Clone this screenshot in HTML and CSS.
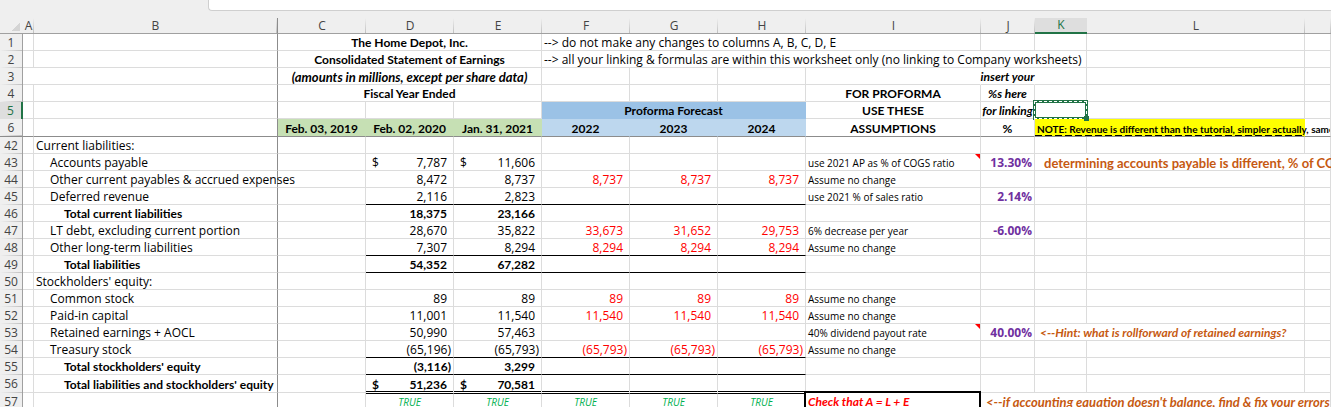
FILE: index.html
```html
<!DOCTYPE html>
<html lang="en">
<head>
    <meta charset="UTF-8">
    <meta name="viewport" content="width=device-width, initial-scale=1.0">
    <title>The Home Depot - Proforma</title>
    <link rel="stylesheet" href="styles.css">
</head>
<body>
    <div class="formula-area">
        <input type="text" class="formula-bar" aria-label="Formula bar">
    </div>

    <table class="sheet">
        <colgroup>
            <col class="col-head"><col class="col-a"><col class="col-b">
            <col class="col-year" span="6">
            <col class="col-i"><col class="col-j"><col class="col-k"><col class="col-l"><col>
        </colgroup>
        <thead>
            <tr>
                <th class="corner"></th><th>A</th><th class="freeze">B</th><th>C</th><th>D</th><th>E</th><th>F</th><th>G</th><th>H</th><th>I</th><th>J</th><th class="selected">K</th><th>L</th><th></th>
            </tr>
        </thead>

        <!-- Frozen rows -->
        <tbody class="frozen">
            <tr>
                <th>1</th><td></td><td class="freeze"></td>
                <td colspan="3" class="title">The Home Depot, Inc.</td>
                <td colspan="4">--&gt; do not make any changes to columns A, B, C, D, E</td>
                <td></td><td></td><td></td><td></td>
            </tr>
            <tr>
                <th>2</th><td></td><td class="freeze"></td>
                <td colspan="3" class="title">Consolidated Statement of Earnings</td>
                <td colspan="6">--&gt; all your linking &amp; formulas are within this worksheet only (no linking to Company worksheets)</td>
                <td></td><td></td>
            </tr>
            <tr>
                <th>3</th><td colspan="2" class="freeze"></td>
                <td colspan="3" class="title units"><em>(amounts in millions, except per share data)</em></td>
                <td></td><td></td><td></td><td class="open"></td>
                <td class="hint open"><span>insert your</span></td><td></td><td></td><td></td>
            </tr>
            <tr>
                <th>4</th><td></td><td class="freeze"></td>
                <td colspan="3" class="title">Fiscal Year Ended</td>
                <td></td><td></td><td></td><td class="title">FOR PROFORMA</td>
                <td class="hint"><span>%s here</span></td><td></td><td></td><td></td>
            </tr>
            <tr>
                <th class="selected">5</th><td></td><td class="freeze"></td>
                <td></td><td></td><td></td>
                <td colspan="3" class="title forecast">Proforma Forecast</td>
                <td class="title">USE THESE</td>
                <td class="hint"><span>for linking</span></td><td class="active"><i class="handle"></i></td><td></td><td></td>
            </tr>
            <tr class="last">
                <th>6</th><td></td><td class="freeze"></td>
                <td class="title actual">Feb. 03, 2019</td><td class="title actual">Feb. 02, 2020</td><td class="title actual">Jan. 31, 2021</td>
                <td class="title year">2022</td><td class="title year">2023</td><td class="title year">2024</td>
                <td class="title">ASSUMPTIONS</td><td class="title">%</td>
                <td colspan="2" class="alert">NOTE: Revenue is different than the tutorial, simpler actually, same</td><td></td>
            </tr>
        </tbody>

        <tbody class="data">
            <tr>
                <th>42</th><td></td><td class="freeze">Current liabilities:</td>
                <td></td><td></td><td></td><td></td><td></td><td></td><td></td><td></td><td></td><td></td><td></td>
            </tr>
            <tr>
                <th>43</th><td></td><td class="freeze item">Accounts payable</td><td></td>
                <td class="num"><div class="money"><span>$</span><span>7,787</span></div></td>
                <td class="num"><div class="money"><span>$</span><span>11,606</span></div></td>
                <td></td><td></td><td></td>
                <td class="note comment">use 2021 AP as % of COGS ratio</td><td class="pct">13.30%</td>
                <td colspan="3" class="tip indent">determining accounts payable is different, % of COGS</td>
            </tr>
            <tr>
                <th>44</th><td></td><td class="freeze item">Other current payables &amp; accrued expenses</td><td></td>
                <td class="num">8,472</td><td class="num">8,737</td>
                <td class="num calc">8,737</td><td class="num calc">8,737</td><td class="num calc">8,737</td>
                <td class="note">Assume no change</td><td></td><td></td><td></td><td></td>
            </tr>
            <tr class="line">
                <th>45</th><td></td><td class="freeze item">Deferred revenue</td><td></td>
                <td class="num">2,116</td><td class="num">2,823</td>
                <td class="num"></td><td class="num"></td><td class="num"></td>
                <td class="note">use 2021 % of sales ratio</td><td class="pct">2.14%</td><td></td><td></td><td></td>
            </tr>
            <tr>
                <th>46</th><td></td><td class="freeze total">Total current liabilities</td><td></td>
                <td class="num bold">18,375</td><td class="num bold">23,166</td>
                <td></td><td></td><td></td><td></td><td></td><td></td><td></td><td></td>
            </tr>
            <tr>
                <th>47</th><td></td><td class="freeze item">LT debt, excluding current portion</td><td></td>
                <td class="num">28,670</td><td class="num">35,822</td>
                <td class="num calc">33,673</td><td class="num calc">31,652</td><td class="num calc">29,753</td>
                <td class="note">6% decrease per year</td><td class="pct">-6.00%</td><td></td><td></td><td></td>
            </tr>
            <tr class="line">
                <th>48</th><td></td><td class="freeze item">Other long-term liabilities</td><td></td>
                <td class="num">7,307</td><td class="num">8,294</td>
                <td class="num calc">8,294</td><td class="num calc">8,294</td><td class="num calc">8,294</td>
                <td class="note">Assume no change</td><td></td><td></td><td></td><td></td>
            </tr>
            <tr class="line">
                <th>49</th><td></td><td class="freeze total">Total liabilities</td><td></td>
                <td class="num bold">54,352</td><td class="num bold">67,282</td>
                <td class="num"></td><td class="num"></td><td class="num"></td>
                <td></td><td></td><td></td><td></td><td></td>
            </tr>
            <tr>
                <th>50</th><td></td><td class="freeze">Stockholders' equity:</td>
                <td></td><td></td><td></td><td></td><td></td><td></td><td></td><td></td><td></td><td></td><td></td>
            </tr>
            <tr>
                <th>51</th><td></td><td class="freeze item">Common stock</td><td></td>
                <td class="num">89</td><td class="num">89</td>
                <td class="num calc">89</td><td class="num calc">89</td><td class="num calc">89</td>
                <td class="note">Assume no change</td><td></td><td></td><td></td><td></td>
            </tr>
            <tr>
                <th>52</th><td></td><td class="freeze item">Paid-in capital</td><td></td>
                <td class="num">11,001</td><td class="num">11,540</td>
                <td class="num calc">11,540</td><td class="num calc">11,540</td><td class="num calc">11,540</td>
                <td class="note">Assume no change</td><td></td><td></td><td></td><td></td>
            </tr>
            <tr>
                <th>53</th><td></td><td class="freeze item">Retained earnings + AOCL</td><td></td>
                <td class="num">50,990</td><td class="num">57,463</td>
                <td></td><td></td><td></td>
                <td class="note comment">40% dividend payout rate</td><td class="pct">40.00%</td>
                <td colspan="2" class="tip small"><em>&lt;--Hint: what is rollforward of retained earnings?</em></td><td></td>
            </tr>
            <tr class="line">
                <th>54</th><td></td><td class="freeze item">Treasury stock</td><td></td>
                <td class="num neg">(65,196)</td><td class="num neg">(65,793)</td>
                <td class="num neg calc">(65,793)</td><td class="num neg calc">(65,793)</td><td class="num neg calc">(65,793)</td>
                <td class="note">Assume no change</td><td></td><td></td><td></td><td></td>
            </tr>
            <tr class="line">
                <th>55</th><td></td><td class="freeze total">Total stockholders' equity</td><td></td>
                <td class="num neg bold">(3,116)</td><td class="num bold">3,299</td>
                <td class="num"></td><td class="num"></td><td class="num"></td>
                <td></td><td></td><td></td><td></td><td></td>
            </tr>
            <tr class="grand">
                <th>56</th><td></td><td class="freeze total">Total liabilities and stockholders' equity</td><td></td>
                <td class="num bold"><div class="money"><span>$</span><span>51,236</span></div></td>
                <td class="num bold"><div class="money"><span>$</span><span>70,581</span></div></td>
                <td class="num"></td><td class="num"></td><td class="num"></td>
                <td></td><td></td><td></td><td></td><td></td>
            </tr>
            <tr>
                <th>57</th><td></td><td class="freeze"></td><td></td>
                <td class="true">TRUE</td><td class="true">TRUE</td><td class="true">TRUE</td><td class="true">TRUE</td><td class="true">TRUE</td>
                <td class="check">Check that A = L + E</td>
                <td colspan="4" class="tip balance"><em>&lt;--if accounting equation doesn't balance, find &amp; fix your errors</em></td>
            </tr>
        </tbody>
    </table>
</body>
</html>
```
FILE: styles.css
```css
* {
    box-sizing: border-box;
}

body {
    margin: 0;
    height: 100vh;
    overflow: hidden;
    background-color: #ffffff;
    color: #000000;
    font-family: "Open Sans", "Noto Sans", sans-serif;
    font-size: 12px;
    line-height: 14px;
}

/* Formula bar */
.formula-area {
    height: 18px;
    padding-left: 208px;
    background-color: #efefef;
}

.formula-bar {
    display: block;
    width: 100%;
    height: 11px;
    padding: 0 8px;
    border: 1px solid #cfcfcf;
    border-width: 0 0 1px 1px;
    border-radius: 0 0 0 4px;
    background-color: #ffffff;
    font: inherit;
    outline: none;
}

/* Grid */
.sheet {
    width: 100%;
    table-layout: fixed;
    border-collapse: separate;
    border-spacing: 0;
}

.col-head { width: 23px; }
.col-a { width: 11px; }
.col-b { width: 244px; }
.col-year { width: 88px; }
.col-i { width: 175px; }
.col-j { width: 54px; }
.col-k { width: 52px; }
.col-l { width: 218px; }

.sheet tr {
    height: 17px;
}

.sheet thead tr {
    height: 16px;
}

.sheet .last,
.sheet .grand {
    height: 18px;
}

.sheet td {
    position: relative;
    padding: 0 2px;
    border-right: 1px solid #dcdcdc;
    border-bottom: 1px solid #dcdcdc;
    white-space: nowrap;
    vertical-align: bottom;
}

.sheet th {
    padding: 0;
    font-weight: normal;
    color: #444444;
    background-color: #efefef;
}

.sheet thead th {
    border-bottom: 1px solid #a0a0a0;
    background-image: linear-gradient(#efefef, #c0c0c0);
    background-size: 1px 100%;
    background-position: right;
    background-repeat: no-repeat;
}

.sheet tbody th {
    border-right: 1px solid #a0a0a0;
    background-image: linear-gradient(to right, #efefef, #c0c0c0);
    background-size: 100% 1px;
    background-position: bottom;
    background-repeat: no-repeat;
}

.sheet thead .corner {
    background: linear-gradient(135deg, #efefef 50%, #d4d4d4 50%) 12px 5px / 8px 8px no-repeat #efefef;
}

.sheet thead .selected {
    background: #dedede;
    color: #217346;
    border-bottom: 2px solid #217346;
}

.sheet tbody .selected {
    background: #dedede;
    color: #217346;
    border-right: 2px solid #217346;
}

.sheet .freeze {
    border-right: 1px solid #8c8c8c;
}

.sheet .last td,
.sheet .last th {
    border-bottom: 1px solid #8c8c8c;
}

.sheet .open {
    border-right-color: transparent;
}

/* Heading cells */
.title,
.bold,
.total,
.alert,
.tip,
.check,
.hint {
    font-family: Lato, "Open Sans", sans-serif;
    font-weight: bold;
}

.title {
    text-align: center;
}

.units {
    font-size: 13px;
}

.sheet .forecast {
    background-color: #9bc2e6;
    border-color: #9bc2e6;
}

.sheet .year {
    background-color: #bdd7ee;
    border-right-color: #bdd7ee;
}

.sheet .actual {
    background-color: #c6e0b4;
    border-right-color: #c6e0b4;
}

.hint span {
    display: flex;
    justify-content: center;
    font-size: 12px;
    font-style: italic;
}

.sheet .alert {
    background: repeating-linear-gradient(to right, #000000 0 7px, #ffff00 7px 10px) bottom / 100% 1px no-repeat #ffff00;
    border-right-color: #ffff00;
    font-size: 10px;
}

/* Copied cell outline */
.active::before {
    content: "";
    position: absolute;
    inset: -2px;
    border: 3px solid #217346;
}

.active::after {
    content: "";
    position: absolute;
    inset: -1px;
    border: 1px dashed #ffffff;
}

.handle {
    position: absolute;
    right: -3px;
    bottom: -3px;
    width: 5px;
    height: 5px;
    background-color: #217346;
    z-index: 1;
}

/* Statement cells */
.sheet .item {
    padding-left: 16px;
}

.sheet .total {
    padding-left: 30px;
}

.sheet .num {
    padding: 0 6px;
    text-align: right;
}

.sheet .neg {
    padding-right: 2px;
}

.calc {
    color: #ff0000;
}

.money {
    display: flex;
    justify-content: space-between;
}

.sheet .line .num {
    border-bottom-color: #000000;
}

.sheet .grand .num {
    border-bottom-color: #ffffff;
    box-shadow: inset 0 -1px 0 #000000;
}

.note {
    font-size: 10px;
}

.comment::after {
    content: "";
    position: absolute;
    top: 0;
    right: 0;
    border-top: 5px solid #ff0000;
    border-left: 5px solid transparent;
}

.pct {
    color: #7030a0;
    font-weight: bold;
    text-align: right;
}

.tip {
    color: #c65911;
    font-size: 13px;
}

.sheet .small {
    padding-left: 5px;
    font-size: 12px;
}

.sheet .balance {
    padding-left: 5px;
}

.sheet .indent {
    padding-left: 9px;
}

.sheet .true {
    border-top: 1px solid #000000;
    color: #00b050;
    font-size: 10px;
    font-style: italic;
    text-align: center;
}

.sheet .check {
    border-right: 2px solid #000000;
    box-shadow: -2px 0 0 #000000, 0 -2px 0 #000000, -2px -2px 0 #000000;
    color: #ff0000;
    font-style: italic;
}
```
